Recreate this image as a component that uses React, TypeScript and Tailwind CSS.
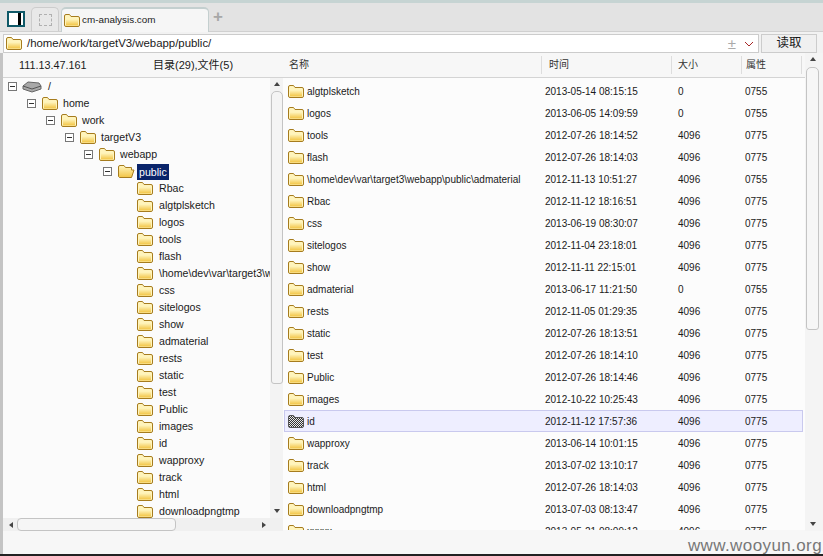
import React from "react";

const treeChildren = ["Rbac", "algtplsketch", "logos", "tools", "flash", "\\home\\dev\\var\\target3\\webapp\\public\\admaterial", "css", "sitelogos", "show", "admaterial", "rests", "static", "test", "Public", "images", "id", "wapproxy", "track", "html", "downloadpngtmp"];

const files = [
  ["algtplsketch", "2013-05-14 08:15:15", "0", "0755"],
  ["logos", "2013-06-05 14:09:59", "0", "0755"],
  ["tools", "2012-07-26 18:14:52", "4096", "0775"],
  ["flash", "2012-07-26 18:14:03", "4096", "0775"],
  ["\\home\\dev\\var\\target3\\webapp\\public\\admaterial", "2012-11-13 10:51:27", "4096", "0755"],
  ["Rbac", "2012-11-12 18:16:51", "4096", "0775"],
  ["css", "2013-06-19 08:30:07", "4096", "0775"],
  ["sitelogos", "2012-11-04 23:18:01", "4096", "0775"],
  ["show", "2012-11-11 22:15:01", "4096", "0775"],
  ["admaterial", "2013-06-17 11:21:50", "0", "0755"],
  ["rests", "2012-11-05 01:29:35", "4096", "0775"],
  ["static", "2012-07-26 18:13:51", "4096", "0775"],
  ["test", "2012-07-26 18:14:10", "4096", "0775"],
  ["Public", "2012-07-26 18:14:46", "4096", "0775"],
  ["images", "2012-10-22 10:25:43", "4096", "0775"],
  ["id", "2012-11-12 17:57:36", "4096", "0775"],
  ["wapproxy", "2013-06-14 10:01:15", "4096", "0775"],
  ["track", "2013-07-02 13:10:17", "4096", "0775"],
  ["html", "2012-07-26 18:14:03", "4096", "0775"],
  ["downloadpngtmp", "2013-07-03 08:13:47", "4096", "0775"],
  ["xxxxx", "2013-05-21 08:09:12", "4096", "0775"],
];

const Folder = ({ open = false, hatched = false }: { open?: boolean; hatched?: boolean }) => (
  <svg width="18" height="15" viewBox="0 0 18 15" className="shrink-0">
    <defs>
      <linearGradient id="fold" x1="0" y1="0" x2="0" y2="1">
        <stop offset="0" stopColor="#fff6c0" />
        <stop offset="1" stopColor="#f2c444" />
      </linearGradient>
      <pattern id="hatch" width="2" height="2" patternUnits="userSpaceOnUse">
        <rect width="2" height="2" fill="#e8e8e8" />
        <rect width="1" height="1" fill="#333" />
        <rect x="1" y="1" width="1" height="1" fill="#333" />
      </pattern>
    </defs>
    {open ? (
      <path d="M1.5 12.5 L1.5 3 Q1.5 1.5 3 1.5 L7 1.5 L8.5 3.5 L14.5 3.5 L14.5 6 L17 6 L14.5 13.5 L2.5 13.5 Z" fill="url(#fold)" stroke="#a67c1e" strokeLinejoin="round" />
    ) : (
      <>
        <path d="M1.5 12 L1.5 3 Q1.5 1.5 3 1.5 L6.5 1.5 L8 3.5 L15 3.5 Q16.5 3.5 16.5 5 L16.5 12 Q16.5 13.5 15 13.5 L3 13.5 Q1.5 13.5 1.5 12 Z" fill={hatched ? "url(#hatch)" : "#fff4bc"} stroke={hatched ? "#555" : "#a67c1e"} />
        {!hatched && <rect x="3" y="6" width="12" height="6.5" fill="url(#fold)" />}
      </>
    )}
  </svg>
);

const Expander = () => (
  <span className="w-[9px] h-[9px] border border-[#777] bg-white flex items-center justify-center shrink-0">
    <span className="w-[5px] h-px bg-[#333]" />
  </span>
);

const Arrow = ({ dir }: { dir: "up" | "down" | "left" | "right" }) => {
  const points = { up: "0,4 3,0 6,4", down: "0,0 3,4 6,0", left: "4,0 0,3 4,6", right: "0,0 4,3 0,6" }[dir];
  return (
    <svg width="6" height="6" viewBox="0 0 6 6" className="shrink-0">
      <polygon points={points} fill="#444" />
    </svg>
  );
};

const TreeRow = ({ depth, label, selected, open, leaf }: { depth: number; label: string; selected?: boolean; open?: boolean; leaf?: boolean }) => (
  <div className="h-[17px] flex items-center shrink-0 whitespace-nowrap" style={{ paddingLeft: depth * 19 + 5 }}>
    <span className="w-[9px] flex justify-center mr-[5px] shrink-0">{!leaf && <Expander />}</span>
    <Folder open={open} />
    <span className={selected ? "ml-[2px] px-[2px] bg-[#0a246a] text-white leading-[16px]" : leaf ? "ml-[5px]" : "ml-[4px]"}>{label}</span>
  </div>
);

export default function App() {
  return (
    <div className="relative w-[823px] h-[556px] overflow-hidden flex flex-col bg-[#f7f7f7] text-[#1a1a1a] text-[10px] font-['Liberation_Sans','Noto_Sans_CJK_SC',sans-serif]">
      <div className="h-[3px] bg-[#c6d4d3] shrink-0" />
      <div className="h-[29px] bg-[#e3e3e3] shrink-0 flex items-end pl-[7px] border-b border-[#d0d0d0]">
        <div className="w-[18px] h-[16px] mb-[4px] border-2 border-[#0f5968] bg-white flex justify-end shrink-0">
          <span className="w-[3px] h-full bg-black mr-[2px]" />
        </div>
        <div className="w-[28px] h-[24px] ml-[6px] rounded-t-[5px] border border-b-0 border-[#ccc] bg-[#e8e8e8] flex items-center justify-center shrink-0">
          <span className="w-[13px] h-[12px] border border-dashed border-[#b0b0b0]" />
        </div>
        <div className="w-[148px] h-[25px] ml-[2px] rounded-t-[5px] border border-b-0 border-[#c4cfcf] border-t-2 bg-[#f6f6f6] flex items-center pl-[1px] shrink-0 -mb-px">
          <Folder />
          <span className="ml-[1px] text-[9.9px]">cm-analysis.com</span>
        </div>
        <span className="ml-[4px] mb-[2px] text-[#a8a8a8] text-[17px] font-bold leading-[24px]">+</span>
      </div>
      <div className="h-[21px] shrink-0 flex items-center pt-[2px] pl-[3px] bg-[#f2f2f2]">
        <div className="w-[756px] h-[19px] border border-[#ccc] bg-white flex items-center pl-[1px] shrink-0">
          <Folder />
          <span className="ml-[4px] text-[11.4px]">/home/work/targetV3/webapp/public/</span>
          <span className="ml-auto text-[#aaa] text-[15px] leading-none">±</span>
          <svg width="10" height="6" viewBox="0 0 10 6" className="ml-[8px] mr-[4px]">
            <path d="M1 1 L5 5 L9 1" fill="none" stroke="#a82828" />
          </svg>
        </div>
        <button className="w-[56px] h-[19px] ml-[2px] border border-[#ccc] bg-[#f0f0f0] text-[12.5px] leading-none flex items-center justify-center">读取</button>
      </div>
      <div className="flex-1 flex min-h-0">
        <div className="w-[283px] flex flex-col shrink-0 border-l-[3px] border-[#c4c4c4]">
          <div className="h-[25px] flex items-center shrink-0 border-b border-[#d4d4d4] pl-[16px]">
            <span className="text-[10.8px] w-[134px]">111.13.47.161</span>
            <span className="text-[11px]">目录(29),文件(5)</span>
          </div>
          <div className="h-[440px] flex shrink-0 bg-[#fbfbfb]">
            <div className="w-[267px] overflow-hidden flex flex-col text-[10.6px]">
              <div className="h-[17px] flex items-center shrink-0 pl-[5px]">
                <Expander />
                <svg width="20" height="12" viewBox="0 0 20 12" className="ml-[5px] shrink-0">
                  <path d="M1 5 L6 1 L17 2 L19 5 L19 8 L10 11 L1 8 Z" fill="#a8a8a8" stroke="#666" />
                  <path d="M1 5 L10 8 L19 5" fill="none" stroke="#555" />
                </svg>
                <span className="ml-[6px]">/</span>
              </div>
              <TreeRow depth={1} label="home" />
              <TreeRow depth={2} label="work" />
              <TreeRow depth={3} label="targetV3" />
              <TreeRow depth={4} label="webapp" />
              <TreeRow depth={5} label="public" selected open />
              {treeChildren.map((name) => (
                <TreeRow key={name} depth={6} label={name} leaf />
              ))}
            </div>
            <div className="w-[13px] flex flex-col items-center shrink-0 bg-[#f3f3f3]">
              <div className="h-[13px] flex items-center justify-center shrink-0"><Arrow dir="up" /></div>
              <div className="w-[12px] h-[293px] border border-[#c4c4c4] rounded-t-[5px] rounded-b-[3px] bg-[#f4f4f4] shrink-0" />
              <div className="flex-1" />
              <div className="h-[13px] flex items-center justify-center shrink-0"><Arrow dir="down" /></div>
            </div>
          </div>
          <div className="h-[13px] flex items-center shrink-0 bg-[#f0f0f0] pl-[6px]">
            <Arrow dir="left" />
            <div className="w-[159px] h-[13px] ml-[2px] border border-[#c4c4c4] rounded-[4px] bg-[#f6f6f6] shrink-0" />
            <div className="flex-1" />
            <span className="mr-[15px]"><Arrow dir="right" /></span>
          </div>
        </div>
        <div className="flex-1 flex min-w-0 flex-col">
          <div className="flex-1 flex min-h-0">
            <div className="w-[522px] flex flex-col shrink-0">
              <div className="h-[25px] flex items-center shrink-0 border-b border-[#d4d4d4] text-[10px] text-[#333]">
                <span className="w-[259px] pl-[6px] border-r border-[#ddd] h-[18px] leading-[18px] shrink-0">名称</span>
                <span className="w-[130px] pl-[7px] border-r border-[#ddd] h-[18px] leading-[18px] shrink-0">时间</span>
                <span className="w-[70px] pl-[6px] border-r border-[#ddd] h-[18px] leading-[18px] shrink-0">大小</span>
                <span className="w-[60px] pl-[4px] border-r border-[#ddd] h-[18px] leading-[18px] shrink-0">属性</span>
              </div>
              <div className="h-[452px] overflow-hidden pt-[2px] bg-[#fcfcfc] text-[10px] pl-[1px]">
                {files.map(([name, time, size, mode]) => {
                  const selected = name === "id";
                  return (
                    <div key={name} className={`h-[22px] w-[519px] flex items-center whitespace-nowrap ${selected ? "bg-[#eeeeff] outline outline-1 -outline-offset-1 outline-[#c9c9ee]" : ""}`}>
                      <span className="w-[261px] flex items-center pl-[3px] shrink-0 overflow-hidden">
                        <Folder hatched={selected} />
                        <span className="ml-[2px]">{name}</span>
                      </span>
                      <span className="w-[133px] shrink-0">{time}</span>
                      <span className="w-[67px] shrink-0">{size}</span>
                      <span>{mode}</span>
                    </div>
                  );
                })}
              </div>
            </div>
            <div className="w-[18px] flex flex-col items-center shrink-0 bg-[#f4f4f4] pr-[3px]">
              <div className="h-[14px] flex items-center justify-center shrink-0"><Arrow dir="up" /></div>
              <div className="w-[13px] h-[263px] border border-[#c4c4c4] rounded-t-[5px] rounded-b-[3px] bg-[#f6f6f6] shrink-0" />
              <div className="flex-1" />
              <div className="h-[12px] flex items-center justify-center shrink-0"><Arrow dir="down" /></div>
            </div>
          </div>
        </div>
      </div>
      <div className="h-[23px] bg-[#f7f7f7] shrink-0 border-l-[3px] border-[#c4c4c4]" />
      <div className="h-[2px] bg-[#222] shrink-0" />
      <span className="absolute right-[1px] bottom-[0px] font-['Liberation_Sans',sans-serif] text-[17px] leading-[20px] tracking-[0.4px] text-[#777]">www.wooyun.org</span>
    </div>
  );
}
